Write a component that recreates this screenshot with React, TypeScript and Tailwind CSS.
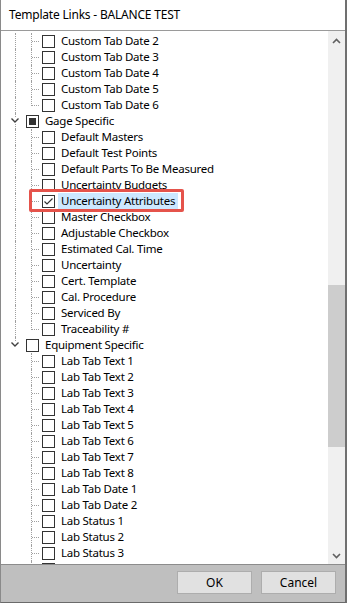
import React from 'react';

type Child = { label: string; checked?: boolean; selected?: boolean };
type Group = { label?: string; state?: 'none' | 'mixed'; lastRoot?: boolean; more?: boolean; children: Child[] };

const dot = 'border-l border-dotted border-[#a0a0a0]';

const groups: Group[] = [
  {
    children: ['Custom Tab Date 2', 'Custom Tab Date 3', 'Custom Tab Date 4', 'Custom Tab Date 5', 'Custom Tab Date 6'].map((label) => ({ label })),
  },
  {
    label: 'Gage Specific',
    state: 'mixed',
    children: [
      { label: 'Default Masters' },
      { label: 'Default Test Points' },
      { label: 'Default Parts To Be Measured' },
      { label: 'Uncertainty Budgets' },
      { label: 'Uncertainty Attributes', checked: true, selected: true },
      { label: 'Master Checkbox' },
      { label: 'Adjustable Checkbox' },
      { label: 'Estimated Cal. Time' },
      { label: 'Uncertainty' },
      { label: 'Cert. Template' },
      { label: 'Cal. Procedure' },
      { label: 'Serviced By' },
      { label: 'Traceability #' },
    ],
  },
  {
    label: 'Equipment Specific',
    state: 'none',
    lastRoot: true,
    more: true,
    children: [
      'Lab Tab Text 1', 'Lab Tab Text 2', 'Lab Tab Text 3', 'Lab Tab Text 4', 'Lab Tab Text 5', 'Lab Tab Text 6',
      'Lab Tab Text 7', 'Lab Tab Text 8', 'Lab Tab Date 1', 'Lab Tab Date 2', 'Lab Status 1', 'Lab Status 2',
      'Lab Status 3', '',
    ].map((label) => ({ label })),
  },
];

const Checkbox = ({ state }: { state: 'none' | 'mixed' | 'checked' }) => (
  <div className="w-[13px] h-[13px] shrink-0 border border-[#333333] bg-white flex items-center justify-center">
    {state === 'mixed' && <div className="w-[7px] h-[7px] bg-[#333333]" />}
    {state === 'checked' && (
      <svg width="11" height="11" viewBox="0 0 11 11">
        <path d="M1.5 5.5 L4 8 L9.5 2.5" fill="none" stroke="#333" strokeWidth="1.2" />
      </svg>
    )}
  </div>
);

const Label = ({ text, selected }: { text: string; selected?: boolean }) =>
  text ? (
    <span className={`ml-[3px] px-[3px] leading-[16px] whitespace-nowrap ${selected ? 'bg-[#cce8ff]' : ''}`}>{text}</span>
  ) : null;

const RootRow = ({ g }: { g: Group }) => (
  <div className="flex h-4 items-center">
    <div className="w-4 h-4 flex flex-col shrink-0">
      <div className={`ml-[8px] h-[4px] ${dot}`} />
      <svg width="16" height="7" viewBox="0 0 16 7" className="shrink-0">
        <path d="M4.5 1.5 L8 5 L11.5 1.5" fill="none" stroke="#404040" strokeWidth="1.4" />
      </svg>
      {!g.lastRoot && <div className={`ml-[8px] h-[5px] ${dot}`} />}
    </div>
    <div className="ml-[3px]">
      <Checkbox state={g.state ?? 'none'} />
    </div>
    <Label text={g.label ?? ''} />
  </div>
);

const ChildRow = ({ c, last, rootLine }: { c: Child; last: boolean; rootLine: boolean }) => (
  <div className="flex h-4 items-center">
    <div className="w-4 h-4 shrink-0">{rootLine && <div className={`ml-[8px] h-full ${dot}`} />}</div>
    <div className="w-4 h-4 shrink-0 flex">
      <div className="w-[8px]" />
      <div className={`w-px ${last ? 'h-[9px]' : 'h-full'} ${dot}`} />
      <div className="w-[7px] mt-[8px] h-0 border-t border-dotted border-[#a0a0a0]" />
    </div>
    <div className="ml-[3px]">
      <Checkbox state={c.checked ? 'checked' : 'none'} />
    </div>
    <Label text={c.label} selected={c.selected} />
  </div>
);

const Arrow = ({ up }: { up?: boolean }) => (
  <svg width="9" height="6" viewBox="0 0 9 6">
    <path d={up ? 'M1 5 L4.5 1.5 L8 5' : 'M1 1 L4.5 4.5 L8 1'} fill="none" stroke="#606060" strokeWidth="1.6" />
  </svg>
);

export default function App() {
  return (
    <div
      className="w-[347px] h-[603px] flex flex-col bg-white border-l border-l-[#8a8a8a] border-r-2 border-r-[#707070] border-b border-b-[#6a6a6a] text-[11.5px] tracking-[-0.25px] text-black overflow-hidden"
      style={{ fontFamily: '"Noto Sans", "Open Sans", sans-serif' }}
    >
      {/* Title */}
      <div className="h-[31px] shrink-0 flex items-center pl-[8px] border-b border-[#9a9a9a] text-[12px] tracking-[-0.2px]">
        Template Links - BALANCE TEST
      </div>

      {/* Tree + scrollbar */}
      <div className="h-[533px] shrink-0 flex">
        <div className="relative flex-1 overflow-hidden pt-[2px] pl-[6px]">
          {groups.map((g, gi) => (
            <div key={gi}>
              {g.label && <RootRow g={g} />}
              {g.children.map((c, ci) => (
                <ChildRow key={ci} c={c} last={ci === g.children.length - 1 && !g.more} rootLine={!g.lastRoot} />
              ))}
            </div>
          ))}
          {/* red annotation */}
          <div className="absolute left-[28px] top-[158px] w-[155px] h-[23px] border-[3px] border-[#e5534b] rounded-[2px]" />
        </div>
        <div className="w-[17px] shrink-0 bg-[#f0f0f0] flex flex-col">
          <div className="h-[19px] flex items-center justify-center">
            <Arrow up />
          </div>
          <div className="h-[235px]" />
          <div className="h-[162px] bg-[#cdcdcd]" />
          <div className="flex-1" />
          <div className="h-[17px] flex items-center justify-center">
            <Arrow />
          </div>
        </div>
      </div>

      {/* Buttons */}
      <div className="flex-1 bg-[#bfbfbf] border-t border-[#8c8c8c] flex justify-end items-start pt-[6px] pr-[9px] gap-[9px] text-[12px] tracking-normal">
        <button className="w-[75px] h-[23px] bg-[#e1e1e1] border border-[#adadad]">OK</button>
        <button className="w-[75px] h-[23px] bg-[#e1e1e1] border border-[#adadad]">Cancel</button>
      </div>
    </div>
  );
}
